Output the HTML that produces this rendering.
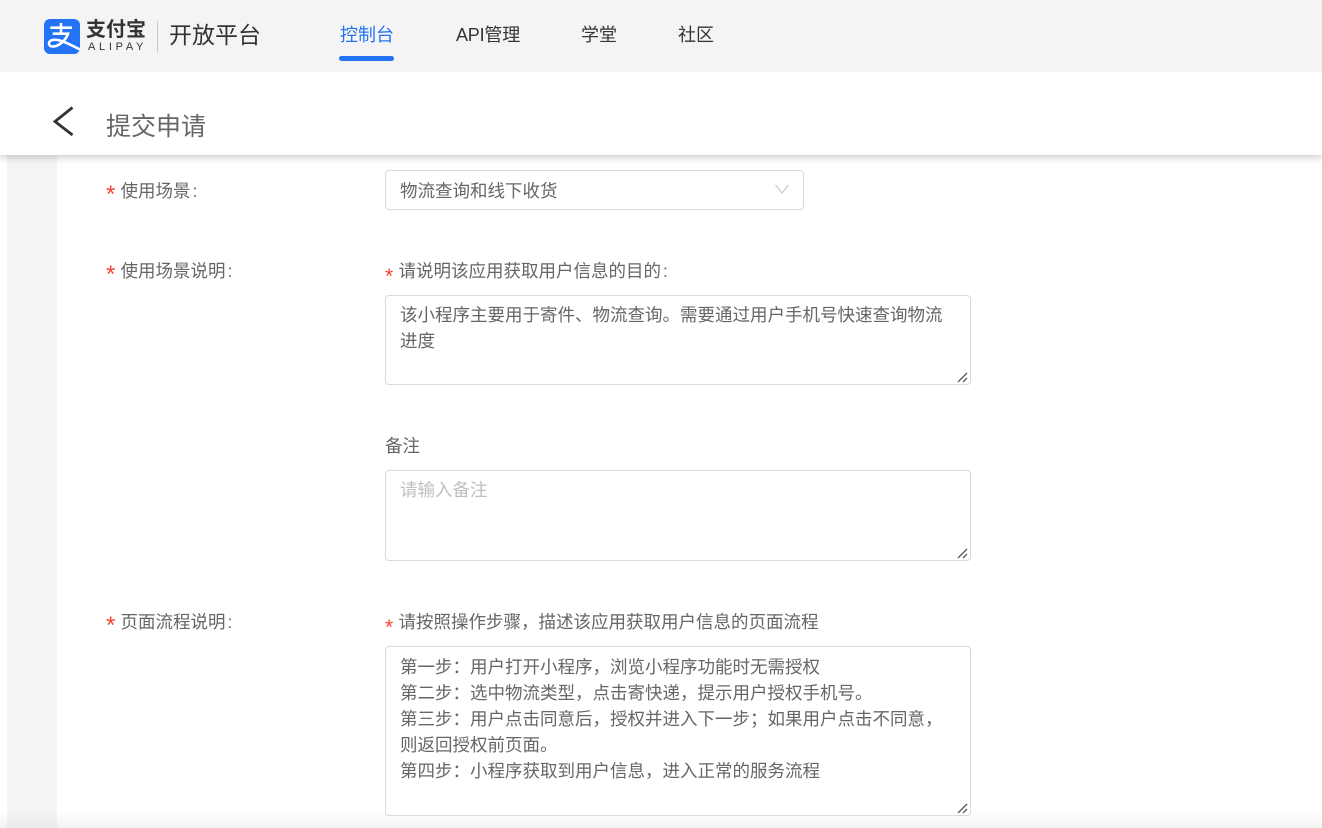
<!DOCTYPE html>
<html lang="zh"><head><meta charset="utf-8">
<style>
html,body{margin:0;padding:0;width:1322px;height:828px;overflow:hidden;background:#fff;font-family:"Liberation Sans","Noto Sans CJK SC",sans-serif;color:#666}
.a{position:absolute;white-space:nowrap;line-height:24px}
.box{position:absolute;box-sizing:border-box;border:1px solid #d9d9d9;border-radius:4px;background:#fff}
.t{font-size:17.5px}
.t i{font-style:normal;margin-left:2px}
.star{position:absolute;color:#f5432f;font-size:24px;line-height:24px}
.star.s{font-size:21px}
svg{position:absolute;display:block}
</style></head><body>
<div style="position:absolute;left:0;top:0;width:1322px;height:72px;background:#f4f4f4"></div>
<div style="position:absolute;left:7px;top:155px;width:50px;height:673px;background:#f4f4f4"></div>
<div style="position:absolute;left:0;top:72px;width:1322px;height:83px;background:#fff;box-shadow:0 2px 8px rgba(0,0,0,.22);clip-path:inset(0 0 -20px 0)"></div>
<div style="position:absolute;left:0;top:812px;width:1322px;height:16px;background:linear-gradient(rgba(0,0,0,0),rgba(0,0,0,.05))"></div>

<svg style="left:44px;top:19px" width="36" height="35" viewBox="0 0 36 35"><defs><clipPath id="c"><rect width="36" height="35" rx="6"/></clipPath></defs><rect width="36" height="35" rx="6" fill="#2473f6"/><path clip-path="url(#c)" d="M6.300 8.700H28M17 4V14.700M8.700 14.700H24C22 21 15 27.500 8.500 27.500C4 27.500 3.500 22 8.500 21C15 19.500 25 25 37 31" fill="none" stroke="#fff" stroke-width="2.600"/></svg>
<div class="a" style="left:86px;top:18px;font-size:20px;font-weight:bold;color:#333">支付宝</div>
<div class="a" style="left:88px;top:40px;font-size:11px;line-height:14px;color:#333;letter-spacing:3.700px">ALIPAY</div>
<div style="position:absolute;left:157px;top:21px;width:1px;height:31px;background:#c9c9c9"></div>
<div class="a" style="left:169px;top:20px;font-size:23px;line-height:30px;color:#333">开放平台</div>

<div class="a" style="left:340px;top:23px;font-size:18px;color:#2473f6">控制台</div>
<div style="position:absolute;left:339px;top:56px;width:55px;height:5px;border-radius:3px;background:#2473f6"></div>
<div class="a" style="left:456px;top:23px;font-size:18px;color:#333;letter-spacing:-.2px">API管理</div>
<div class="a" style="left:581px;top:23px;font-size:18px;color:#333">学堂</div>
<div class="a" style="left:678px;top:23px;font-size:18px;color:#333">社区</div>

<svg style="left:50px;top:104px" width="26" height="34" viewBox="0 0 26 34"><path d="M22.500 3.500L5 17.500L22.500 31" fill="none" stroke="#333" stroke-width="2.800"/></svg>
<div class="a" style="left:106px;top:112px;font-size:25px;line-height:30px;color:#666">提交申请</div>

<div class="star" style="left:106px;top:183px">*</div>
<div class="a t" style="left:120.500px;top:179px">使用场景<i>:</i></div>
<div class="box" style="left:385px;top:170px;width:419px;height:40px"></div>
<div class="a t" style="left:400px;top:179px">物流查询和线下收货</div>
<svg style="left:774px;top:183px" width="16" height="12" viewBox="0 0 16 12"><path d="M1.500 2L8 10L14.500 2" fill="none" stroke="#ccc" stroke-width="1.300"/></svg>

<div class="star" style="left:106px;top:263px">*</div>
<div class="a t" style="left:120.500px;top:259px">使用场景说明<i>:</i></div>
<div class="star s" style="left:385px;top:265px">*</div>
<div class="a t" style="left:398.500px;top:259px">请说明该应用获取用户信息的目的<i>:</i></div>
<div class="box" style="left:385px;top:295px;width:586px;height:90px"></div>
<div class="a t" style="left:400px;top:302px;line-height:26px">该小程序主要用于寄件、物流查询。需要通过用户手机号快速查询物流<br>进度</div>
<svg style="left:957px;top:372px" width="12" height="12" viewBox="0 0 12 12"><path d="M1 10L10 1M6 10L10 6" stroke="#555" stroke-width="1.300"/></svg>

<div class="a t" style="left:385px;top:434px">备注</div>
<div class="box" style="left:385px;top:470px;width:586px;height:91px"></div>
<div class="a t" style="left:400px;top:478px;color:#bfbfbf">请输入备注</div>
<svg style="left:957px;top:548px" width="12" height="12" viewBox="0 0 12 12"><path d="M1 10L10 1M6 10L10 6" stroke="#555" stroke-width="1.300"/></svg>

<div class="star" style="left:106px;top:614px">*</div>
<div class="a t" style="left:120.500px;top:610px">页面流程说明<i>:</i></div>
<div class="star s" style="left:385px;top:616px">*</div>
<div class="a t" style="left:398.500px;top:610px">请按照操作步骤，描述该应用获取用户信息的页面流程</div>
<div class="box" style="left:385px;top:646px;width:586px;height:170px"></div>
<div class="a t" style="left:400px;top:653.500px;line-height:26.200px">第一步：用户打开小程序，浏览小程序功能时无需授权<br>第二步：选中物流类型，点击寄快递，提示用户授权手机号。<br>第三步：用户点击同意后，授权并进入下一步；如果用户点击不同意，<br>则返回授权前页面。<br>第四步：小程序获取到用户信息，进入正常的服务流程</div>
<svg style="left:957px;top:803px" width="12" height="12" viewBox="0 0 12 12"><path d="M1 10L10 1M6 10L10 6" stroke="#555" stroke-width="1.300"/></svg>
</body></html>
